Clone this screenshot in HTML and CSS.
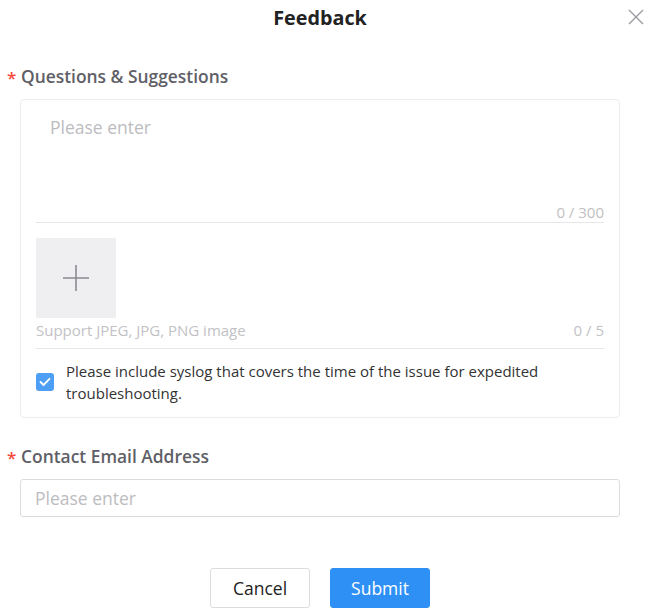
FILE: index.html
```html
<!DOCTYPE html>
<html lang="en">
<head>
<meta charset="utf-8">
<title>Feedback</title>
<link rel="stylesheet" href="styles.css">
</head>
<body>
<div class="dialog">
  <header class="head">
    <h1 class="title">Feedback</h1>
    <button class="close" aria-label="Close">
      <svg width="16" height="16" viewBox="0 0 16 16"><path d="M1 1L15 15M15 1L1 15" stroke="#9a9ba0" stroke-width="1.4" fill="none"/></svg>
    </button>
  </header>

  <div class="field">
    <div class="label"><span class="req">*</span>Questions &amp; Suggestions</div>
    <div class="card">
      <div class="textarea">
        <div class="placeholder">Please enter</div>
        <div class="count">0 / 300</div>
      </div>
      <div class="upload-area">
        <div class="upload">
          <svg width="28" height="28" viewBox="0 0 28 28"><path d="M14 1V27M1 14H27" stroke="#8a8b91" stroke-width="1.6" fill="none"/></svg>
        </div>
        <div class="upload-meta">
          <span>Support JPEG, JPG, PNG image</span>
          <span>0 / 5</span>
        </div>
      </div>
      <label class="check">
        <span class="box">
          <svg width="12" height="10" viewBox="0 0 12 10"><path d="M1.5 5L4.5 8L10.5 1.8" stroke="#fff" stroke-width="1.8" fill="none" stroke-linecap="round" stroke-linejoin="round"/></svg>
        </span>
        <span class="check-text">Please include syslog that covers the time of the issue for expedited troubleshooting.</span>
      </label>
    </div>
  </div>

  <div class="field field-email">
    <div class="label"><span class="req">*</span>Contact Email Address</div>
    <div class="input"><span class="placeholder">Please enter</span></div>
  </div>

  <div class="actions">
    <button class="btn btn-cancel">Cancel</button>
    <button class="btn btn-submit">Submit</button>
  </div>
</div>
</body>
</html>
```

FILE: styles.css
```css
* { box-sizing: border-box; }
html, body { margin: 0; padding: 0; background: #fff; }
body { font-family: "Open Sans", "Noto Sans", sans-serif; color: #333; }

.dialog { width: 652px; height: 611px; padding: 0 32px 0 20px; position: relative; }

.head { height: 36px; display: flex; align-items: center; justify-content: center; position: relative; }
.title { margin: 0; font-size: 19.8px; font-weight: 700; color: #222; line-height: 26px; }
.close { position: absolute; right: -24px; top: 9px; background: none; border: 0; padding: 0; width: 16px; height: 16px; cursor: pointer; }
.close svg { display: block; }

.field { margin-top: 28px; }
.label { position: relative; font-size: 17.4px; font-weight: 600; color: #5f6067; line-height: 24px; padding-left: 1px; }
.req { position: absolute; left: -13px; top: 2px; color: #f5493c; font-size: 17px; font-weight: 600; }

.card { margin-top: 11px; border: 1px solid #ececec; border-radius: 4px; padding: 15px 15px 0 15px; height: 319px; }

.textarea { height: 108px; border-bottom: 1px solid #e6e6e8; position: relative; padding: 0 14px; }
.textarea .placeholder { font-size: 17.5px; color: #bcbcbf; line-height: 24px; }
.count { position: absolute; right: 0; bottom: 0; font-size: 15px; color: #bfbfc2; line-height: 20px; }

.upload-area { padding-top: 15px; border-bottom: 1px solid #e6e6e8; }
.upload { width: 80px; height: 80px; background: #efeff1; display: flex; align-items: center; justify-content: center; }
.upload svg { display: block; }
.upload-meta { display: flex; justify-content: space-between; font-size: 15px; color: #c2c2c5; line-height: 20px; padding: 2px 0 8px; }

.check { display: flex; align-items: center; gap: 12px; padding-top: 11px; }
.box { flex: 0 0 18px; width: 18px; height: 18px; border-radius: 3px; background: #4d9ff5; display: flex; align-items: center; justify-content: center; }
.check-text { font-size: 15px; color: #333; line-height: 22px; }

.field-email { margin-top: 26px; }
.input { margin-top: 11px; height: 38px; border: 1px solid #dcdcdf; border-radius: 3px; padding: 0 14px; display: flex; align-items: center; }
.input .placeholder { font-size: 17.5px; color: #bcbcbf; }

.actions { display: flex; justify-content: center; gap: 20px; margin-top: 51px; }
.btn { width: 100px; height: 40px; border-radius: 3px; font-family: inherit; font-size: 17.5px; cursor: pointer; }
.btn-cancel { background: #fff; border: 1px solid #dcdcdf; color: #222; }
.btn-submit { background: #2e8ff5; border: 1px solid #2e8ff5; color: #fff; }
```
